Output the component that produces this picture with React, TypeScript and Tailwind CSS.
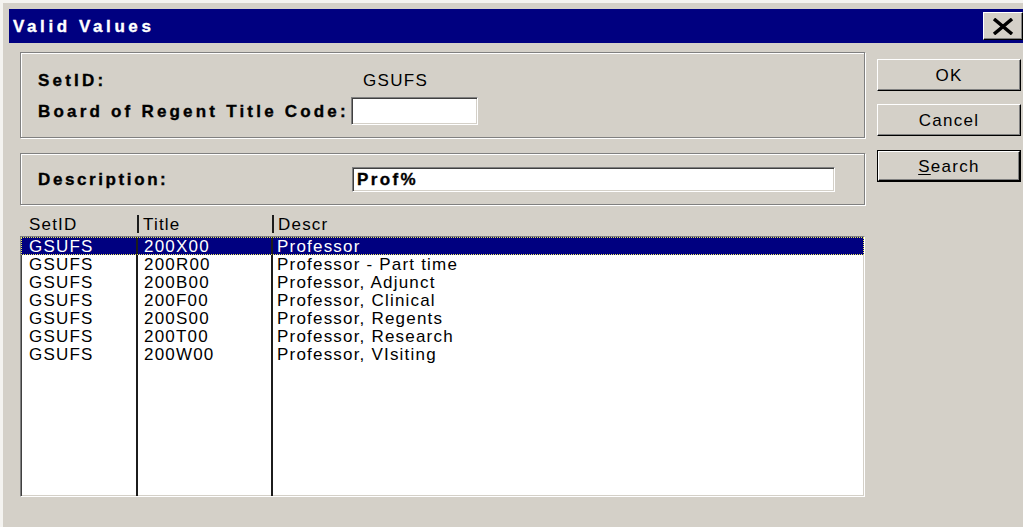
import React from "react";

const ROWS = [
  ["GSUFS", "200X00", "Professor"],
  ["GSUFS", "200R00", "Professor - Part time"],
  ["GSUFS", "200B00", "Professor, Adjunct"],
  ["GSUFS", "200F00", "Professor, Clinical"],
  ["GSUFS", "200S00", "Professor, Regents"],
  ["GSUFS", "200T00", "Professor, Research"],
  ["GSUFS", "200W00", "Professor, VIsiting"],
];

// classic 3D frames
const sunken =
  "border border-[#808080] border-r-white border-b-white shadow-[inset_1px_1px_0_#404040,inset_-1px_-1px_0_#d4d0c8] bg-white";
const raised =
  "border border-white border-r-black border-b-black shadow-[inset_-1px_-1px_0_#808080]";
const etched = "border border-[#808080] shadow-[inset_1px_1px_0_#fff,1px_1px_0_#fff]";
const heavy = "font-bold text-[17px] leading-none [-webkit-text-stroke:0.35px_currentColor]";

function Button({ children, isDefault }: { children: React.ReactNode; isDefault?: boolean }) {
  const face = (
    <div className={`${raised} h-full flex items-center justify-center text-[17px] tracking-[1.3px] leading-none`}>
      {children}
    </div>
  );
  return isDefault ? <div className="h-[32px] border border-black">{face}</div> : <div className="h-[32px]">{face}</div>;
}

export default function App() {
  return (
    <div className="w-[1023px] h-[527px] bg-[#d4d0c8] overflow-hidden text-black font-['Liberation_Sans',Arial,sans-serif]">
      <div className="h-full border-t-[3px] border-l-[3px] border-[#f4f3f0] pt-[6px] pl-[6px]">
        {/* title bar */}
        <div className="h-[34px] bg-[#000080] flex items-center justify-between pl-[4px]">
          <span className={`${heavy} text-white text-[17.5px] tracking-[3.6px]`}>Valid Values</span>
          <div className={`${raised} bg-[#d4d0c8] w-[40px] h-[28px] flex items-center justify-center`}>
            <svg width="22" height="17" viewBox="0 0 22 17">
              <path d="M2 1 L20 16 M20 1 L2 16" stroke="#000" strokeWidth="3.5" fill="none" />
            </svg>
          </div>
        </div>

        <div className="flex pt-[9px] pl-[11px]">
          {/* left side */}
          <div className="w-[845px] flex flex-col">
            <div className={`${etched} h-[86px] pl-[17px] pt-[17px] flex flex-col`}>
              <div className="h-[20px] flex items-center">
                <span className={`${heavy} w-[313px] tracking-[3.2px]`}>SetID:</span>
                <span className="pl-[12px] text-[17px] tracking-[1.3px] leading-none">GSUFS</span>
              </div>
              <div className="h-[28px] mt-[7px] flex items-center">
                <span className={`${heavy} w-[313px] tracking-[3.2px] whitespace-nowrap`}>
                  Board of Regent Title Code:
                </span>
                <div className={`${sunken} w-[127px] h-[28px]`} />
              </div>
            </div>

            <div className={`${etched} h-[52px] mt-[15px] pl-[17px] flex items-center`}>
              <span className={`${heavy} w-[314px] tracking-[2.6px]`}>Description:</span>
              <div className={`${sunken} w-[483px] h-[25px] flex items-center pl-[4px]`}>
                <span className={`${heavy} tracking-[2.4px]`}>Prof%</span>
              </div>
            </div>

            {/* column headers */}
            <div className="h-[31px] pt-[10px]">
              <div className="grid grid-cols-[117px_135px_1fr] h-[18px] text-[17px] tracking-[1.2px] leading-none">
                <div className="flex items-center pl-[9px]">SetID</div>
                <div className="flex items-center pl-[4px] border-l-2 border-[#1c1c1c]">Title</div>
                <div className="flex items-center pl-[4px] border-l-2 border-[#1c1c1c]">Descr</div>
              </div>
            </div>

            {/* result list */}
            <div className={`${sunken} h-[261px] flex flex-col`}>
              {ROWS.map((r, i) => {
                const sel = i === 0;
                return (
                  <div
                    key={i}
                    className={`grid grid-cols-[115px_135px_1fr] h-[18px] shrink-0 text-[17px] tracking-[1.2px] leading-none ${
                      sel ? "bg-[#000080] text-white outline-1 outline-dotted outline-[#e8e860] -outline-offset-1" : ""
                    }`}
                  >
                    <div className="flex items-center pl-[8px]">{r[0]}</div>
                    <div className="flex items-center pl-[6px] border-l-2 border-[#1c1c1c]">{r[1]}</div>
                    <div className="flex items-center pl-[4px] border-l-2 border-[#1c1c1c]">{r[2]}</div>
                  </div>
                );
              })}
              <div className="grid grid-cols-[115px_135px_1fr] flex-1">
                <div />
                <div className="border-l-2 border-[#1c1c1c]" />
                <div className="border-l-2 border-[#1c1c1c]" />
              </div>
            </div>
          </div>

          {/* buttons */}
          <div className="w-[144px] ml-[12px] pt-[7px] flex flex-col">
            <Button>OK</Button>
            <div className="mt-[13px]">
              <Button>Cancel</Button>
            </div>
            <div className="mt-[14px]">
              <Button isDefault>
                <span>
                  <span className="underline underline-offset-2">S</span>earch
                </span>
              </Button>
            </div>
          </div>
        </div>
      </div>
    </div>
  );
}
